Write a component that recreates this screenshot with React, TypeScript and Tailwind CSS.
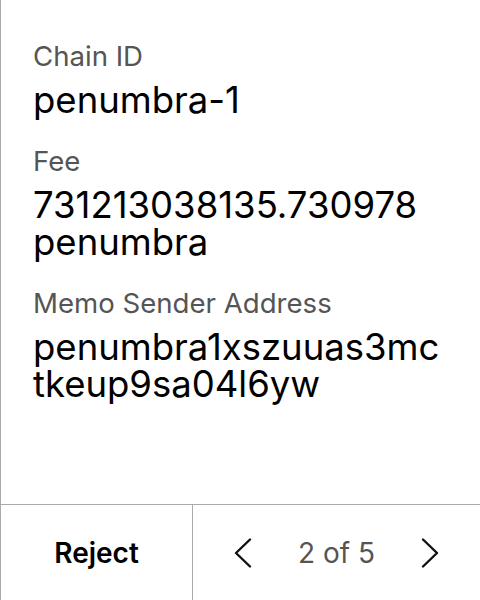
const rows = [
  { label: "Chain ID", value: "penumbra-1" },
  { label: "Fee", value: "731213038135.730978 penumbra" },
  { label: "Memo Sender Address", value: "penumbra1xszuuas3mctkeup9sa04l6yw" },
];

function Chevron({ dir }: { dir: "left" | "right" }) {
  return (
    <svg width="18" height="30" viewBox="0 0 18 30" fill="none" stroke="#111" strokeWidth="2.4" strokeLinecap="round" strokeLinejoin="round">
      {dir === "left" ? <polyline points="16,1.5 2,15 16,28.5" /> : <polyline points="2,1.5 16,15 2,28.5" />}
    </svg>
  );
}

export default function App() {
  return (
    <div
      className="h-[600px] w-[480px] flex flex-col bg-white border-l border-[#aaaaaa] text-black"
      style={{ fontFamily: "Inter, 'Noto Sans', sans-serif" }}
    >
      <div className="flex-1 flex flex-col gap-[26px] pl-[32px] pr-[35px] pt-[40px]">
        {rows.map((r) => (
          <div key={r.label} className="flex flex-col gap-[10px]">
            <div className="text-[27.6px] leading-[32px] text-[#555]">{r.label}</div>
            <div className="text-[36.5px] leading-[37px] [overflow-wrap:anywhere]">{r.value}</div>
          </div>
        ))}
      </div>
      <div className="h-[96px] flex border-t border-[#aaaaaa]">
        <button className="w-[192px] border-r border-[#aaaaaa] text-[28px] font-semibold">
          Reject
        </button>
        <div className="flex-1 flex items-center justify-center gap-[46px]">
          <Chevron dir="left" />
          <span className="text-[28px] text-[#555]">2 of 5</span>
          <Chevron dir="right" />
        </div>
      </div>
    </div>
  );
}
